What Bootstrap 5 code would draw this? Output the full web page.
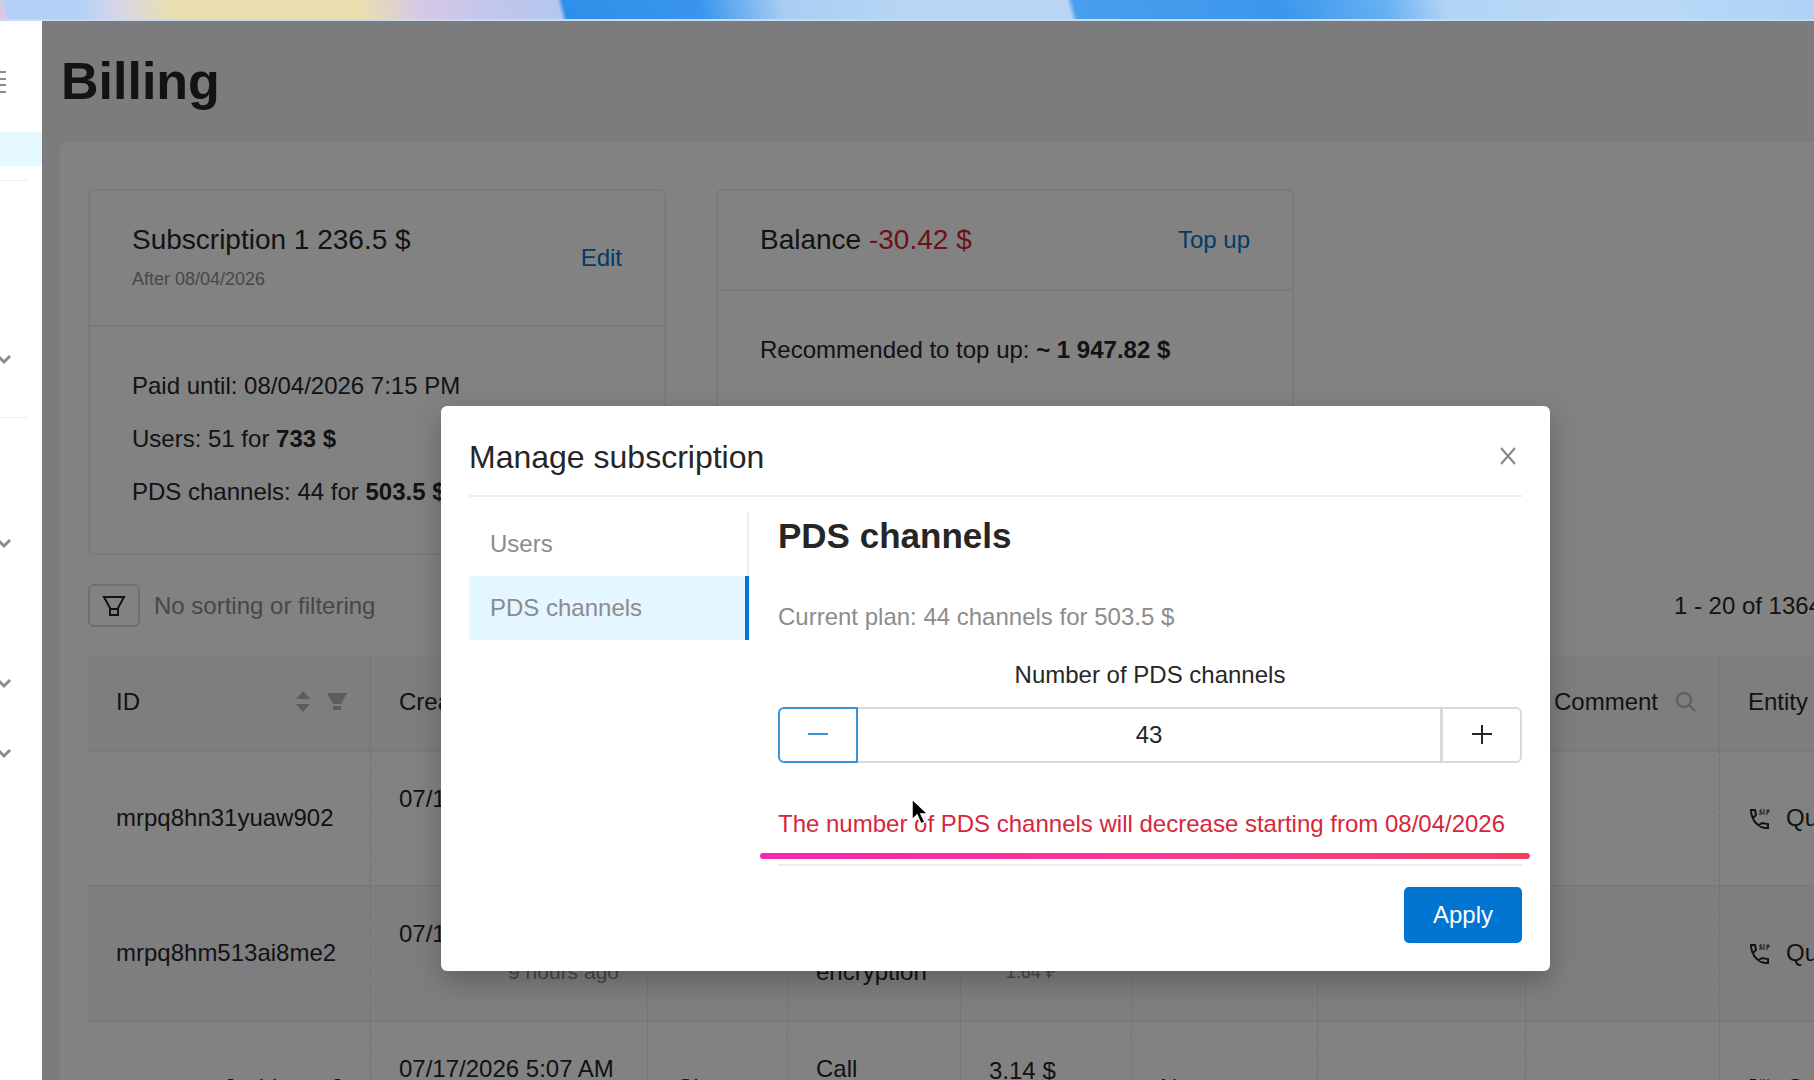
<!DOCTYPE html>
<html lang="en">
<head>
<meta charset="utf-8">
<meta name="viewport" content="width=device-width, initial-scale=1">
<title>Billing</title>
<link href="https://cdn.jsdelivr.net/npm/bootstrap@5.3.0/dist/css/bootstrap.min.css" rel="stylesheet">
<style>
body{font-family:"Liberation Sans",Arial,sans-serif;font-size:24px;line-height:38px;color:#262626;height:100vh;overflow:hidden;background:#fff}
a{color:#0075d1;text-decoration:none}
.wallpaper{height:21px;border-bottom:2px solid #c5dcf3;background:
 linear-gradient(75deg,#d9c8e6 0 6px,#b3d1f7 8px,#b3d1f7 80px,#d8d5e8 115px,#eadfae 170px,#eadfae 350px,#d5c8e6 410px,#c2c6ec 480px,#b4c6f0 543px,#2f8ee9 548px,#3a96ec 680px,#a9cdf3 760px,#b9d7f5 890px,#b9d5f5 1035px,#4a9eec 1041px,#3b97ec 1240px,#66aff2 1340px,#b3d4f6 1400px,#bcdaf6 1570px,#acd2f6 1780px)}
.rail{width:42px;flex:none;background:#fff;color:#8c8c8c;overflow:hidden}
.rail svg{display:block}
.rail .burger{margin-top:49px}
.rail .active-item{height:34px;margin-top:38px;background:#e6f8ff}
.rail hr{width:28px;margin:14px 0 0;border-color:#bfbfbf}
.rail .chev-a{margin-top:174px}.rail .hr-b{margin-top:52px}
.rail .chev-b{margin-top:121px}.rail .chev-c{margin-top:130px}.rail .chev-d{margin-top:60px}
.page{background:#f4f3f9;overflow:hidden;min-width:0}
.page h1{font-size:52px;line-height:60px;font-weight:700;margin:30px 0 31px 19px}
.panel{margin-left:18px;background:#fff;border-radius:6px 0 0 0;padding:47px 0 0 28px}
.billing-cards{gap:50px}
.plan{width:578px;border:2px solid #f0f0f0;border-radius:6px;flex:none}
.plan-head{padding:30px 42px;border-bottom:2px solid #f0f0f0;font-size:28px}
.plan-head a{font-size:24px}
.plan-head .after-date{font-size:18px;line-height:30px;color:#8c8c8c;margin:5px 0 1px}
.plan-body{padding:40px 42px 27px}
.plan-body p{margin:0 0 15px}
.debt{color:#d9202c}
.muted-text{color:#8c8c8c}
.tools{margin-top:29px;padding-bottom:29px;gap:14px}
.filter-btn{width:52px;height:43px;border:2px solid #d9d9d9;border-radius:6px;background:#fff;padding:0;display:grid;place-items:center}
.range{margin-right:-8px}
.charges{table-layout:fixed;width:1849px;border-collapse:separate;border-spacing:0;margin:0}
.charges th{height:96px;background:#f8f8fb;font-weight:400;padding:0 22px 2px 28px;border-bottom:2px solid #f0f0f0;border-right:2px solid #ececec;vertical-align:middle;white-space:nowrap}
.charges td{height:135px;padding:0 28px 2px;border-bottom:2px solid #f0f0f0;border-right:1px dashed #dedede;vertical-align:middle;white-space:nowrap}
.charges td:last-child{padding-left:30px}
.charges tr:nth-child(even) td{background:#f8f8fb}
.charges .sub{display:block;text-align:right;color:#8c8c8c;font-size:21px}
.charges .cost{display:inline-block;vertical-align:middle}
.charges .cost .sub{font-size:18px;line-height:34px}
.charges .wrapping{white-space:normal}
.shade{position:absolute;inset:0;background:rgba(0,0,0,.49)}
.dlg{position:absolute;left:441px;top:406px;width:1109px;background:#fff;border-radius:6px;padding:28px;box-shadow:0 10px 28px rgba(0,0,0,.24);color:#262626}
.dlg-head{padding:4px 0 19px;border-bottom:2px solid #ededed}
.dlg-head h2{font-size:32px;line-height:38px;font-weight:400;margin:0}
.dlg-head button{border:0;background:none;padding:0 6px 2px;line-height:0}
.tabs-col{width:280px;flex:none;margin-top:15px}
.tabs-col a{display:block;color:#8c8c8c;line-height:64px;height:64px;padding-left:21px;border-right:2px solid #ededed}
.tabs-col a.current{background:#e4f6ff;border-right:4px solid #0075d1}
.dlg-main{margin-left:29px;min-width:0;padding-top:18px}
.dlg-main h3{font-size:35px;line-height:42px;font-weight:700;margin:0 0 41px}
.plan-note{color:#8c8c8c;margin:0 0 20px}
.stepper{height:56px;margin-top:13px}
.stepper button{width:80px;border:2px solid #d9d9d9;background:#fff;padding:0;flex:none;display:grid;place-items:center}
.stepper .minus{border-color:#3e93d5;border-radius:6px 0 0 6px}
.stepper .plus{border-radius:0 6px 6px 0;border-left-width:1px}
.stepper input{border:solid #d9d9d9;border-width:2px 2px 2px 0;min-width:0;text-align:center;color:#262626;outline:0}
.alert-line{color:#d7263b;margin:42px 0 0;white-space:nowrap}
.marker{height:6px;margin:10px -8px 0 -18px;border-radius:3px;background:linear-gradient(90deg,#f625b4,#fb3b90 60%,#f43f63)}
.dlg-foot{margin-top:5px;padding-top:21px;border-top:2px solid #ededed}
.apply{background:#0075d1;color:#fff;width:118px;height:56px;border:0;border-radius:5px}
.pointer{position:absolute;left:911px;top:798px}
</style>
</head>
<body class="d-flex flex-column">
<div class="wallpaper flex-shrink-0"></div>
<div class="d-flex flex-grow-1 overflow-hidden">
  <nav class="rail" aria-label="Sections">
    <svg class="burger" width="12" height="24" viewBox="0 0 12 24" fill="none" stroke="currentColor" stroke-width="2"><path d="M0 2h6M0 9h6M0 15h6M0 22h6"/></svg>
    <div class="active-item"></div>
    <hr>
    <svg class="chev-a" width="12" height="10" fill="none" stroke="currentColor" stroke-width="3"><path d="M-2 1l6 6 6-6"/></svg>
    <hr class="hr-b">
    <svg class="chev-b" width="12" height="10" fill="none" stroke="currentColor" stroke-width="3"><path d="M-2 1l6 6 6-6"/></svg>
    <svg class="chev-c" width="12" height="10" fill="none" stroke="currentColor" stroke-width="3"><path d="M-2 1l6 6 6-6"/></svg>
    <svg class="chev-d" width="12" height="10" fill="none" stroke="currentColor" stroke-width="3"><path d="M-2 1l6 6 6-6"/></svg>
  </nav>
  <main class="page flex-grow-1 position-relative">
    <h1>Billing</h1>
    <div class="panel">
      <div class="billing-cards d-flex align-items-start">
        <section class="plan">
          <div class="plan-head d-flex justify-content-between align-items-center">
            <div>Subscription 1 236.5 $<div class="after-date">After 08/04/2026</div></div>
            <a href="#">Edit</a>
          </div>
          <div class="plan-body">
            <p>Paid until: 08/04/2026 7:15 PM</p>
            <p>Users: 51 for <b>733 $</b></p>
            <p>PDS channels: 44 for <b>503.5 $</b></p>
          </div>
        </section>
        <section class="plan">
          <div class="plan-head d-flex justify-content-between align-items-center">
            <div>Balance <span class="debt">-30.42 $</span></div>
            <a href="#">Top up</a>
          </div>
          <div class="plan-body"><p>Recommended to top up: <b>~ 1 947.82 $</b></p></div>
        </section>
      </div>
      <div class="tools d-flex align-items-center">
        <button class="filter-btn" aria-label="Filter"><svg width="24" height="24" viewBox="0 0 24 24" fill="none" stroke="#262626" stroke-width="2"><path d="M2 3h20l-6 11v7H8v-7zM8 15h8"/></svg></button>
        <span class="muted-text">No sorting or filtering</span>
        <span class="ms-auto text-nowrap range">1 - 20 of 1364</span>
      </div>
      <table class="charges">
        <colgroup><col style="width:283px"><col style="width:277px"><col style="width:140px"><col style="width:173px"><col style="width:171px"><col style="width:186px"><col style="width:208px"><col style="width:194px"><col></colgroup>
        <thead><tr>
          <th><div class="d-flex align-items-center">ID
            <svg class="ms-auto" width="16" height="22" fill="#b5b5b8"><path d="M8 0l7 8H1zM8 21l7-8H1z"/></svg>
            <svg class="ms-3" width="20" height="20" fill="#b5b5b8"><path d="M0 1h20l-6 11H6zM6 14h8v4H6z"/></svg></div></th>
          <th>Created</th><th>Type</th><th>Service</th><th>Cost</th><th>User</th><th>Source</th>
          <th><div class="d-flex align-items-center">Comment <svg class="ms-3" width="22" height="22" fill="none" stroke="#b5b5b8" stroke-width="2"><circle cx="10" cy="9" r="7"/><path d="M15 14l6 6"/></svg></div></th>
          <th>Entity</th>
        </tr></thead>
        <tbody id="rows"></tbody>
      </table>
    </div>
    <div class="shade"></div>
  </main>
</div>
<div class="dlg" role="dialog" aria-labelledby="dlgTitle">
  <div class="dlg-head d-flex justify-content-between align-items-center">
    <h2 id="dlgTitle">Manage subscription</h2>
    <button aria-label="Close"><svg width="16" height="18" fill="none" stroke="#858585" stroke-width="2"><path d="M1 1l14 16M15 1L1 17"/></svg></button>
  </div>
  <div class="d-flex">
    <nav class="tabs-col"><a href="#">Users</a><a href="#" class="current">PDS channels</a></nav>
    <div class="dlg-main flex-grow-1">
      <h3>PDS channels</h3>
      <p class="plan-note">Current plan: 44 channels for 503.5 $</p>
      <label for="amount" class="d-block text-center">Number of PDS channels</label>
      <div class="stepper d-flex">
        <button class="minus" aria-label="Decrease"><svg width="20" height="20" stroke="#3e93d5" stroke-width="2"><path d="M0 9h20"/></svg></button>
        <input id="amount" class="flex-grow-1" value="43">
        <button class="plus" aria-label="Increase"><svg width="20" height="20" stroke="#262626" stroke-width="2"><path d="M0 9h20M10 0v19"/></svg></button>
      </div>
      <p class="alert-line">The number of PDS channels will decrease starting from 08/04/2026</p>
      <div class="marker"></div>
      <div class="dlg-foot d-flex justify-content-end"><button class="apply">Apply</button></div>
    </div>
  </div>
</div>
<svg class="pointer" width="18" height="28" viewBox="0 0 18 28"><path d="M1 1v21l5-5 4 9 4-2-4-8h7z" fill="#000" stroke="#fff" stroke-width="1.5"/></svg>
<script>
const phone='<svg class="me-3" width="20" height="22" viewBox="0 0 20 22" fill="none" stroke="#262626" stroke-width="2"><path d="M1 2h4l1 5-3 3c1 4 3 6 6 7l3-2 6 1v4C9 21 1 12 1 2z"/><path d="M12 2h-2v2h2v2h-3M14 1v6M17 7V2h2v2h-2" stroke-width="1"/></svg>';
document.getElementById('rows').innerHTML=['mrpq8hn31yuaw902','mrpq8hm513ai8me2','mrpqgeuo8urlrlnegu8'].map(id=>`<tr><td>${id}</td><td>07/17/2026 5:07 AM<span class="sub">9 hours ago</span></td><td>Charge</td><td class="wrapping">Call encryption</td><td><div class="cost">3.14 $<span class="sub">1.64 ₽</span></div></td><td>None</td><td></td><td></td><td>${phone}Queue</td></tr>`).join('');
</script>
<script src="https://cdn.jsdelivr.net/npm/bootstrap@5.3.0/dist/js/bootstrap.bundle.min.js"></script>
</body>
</html>
